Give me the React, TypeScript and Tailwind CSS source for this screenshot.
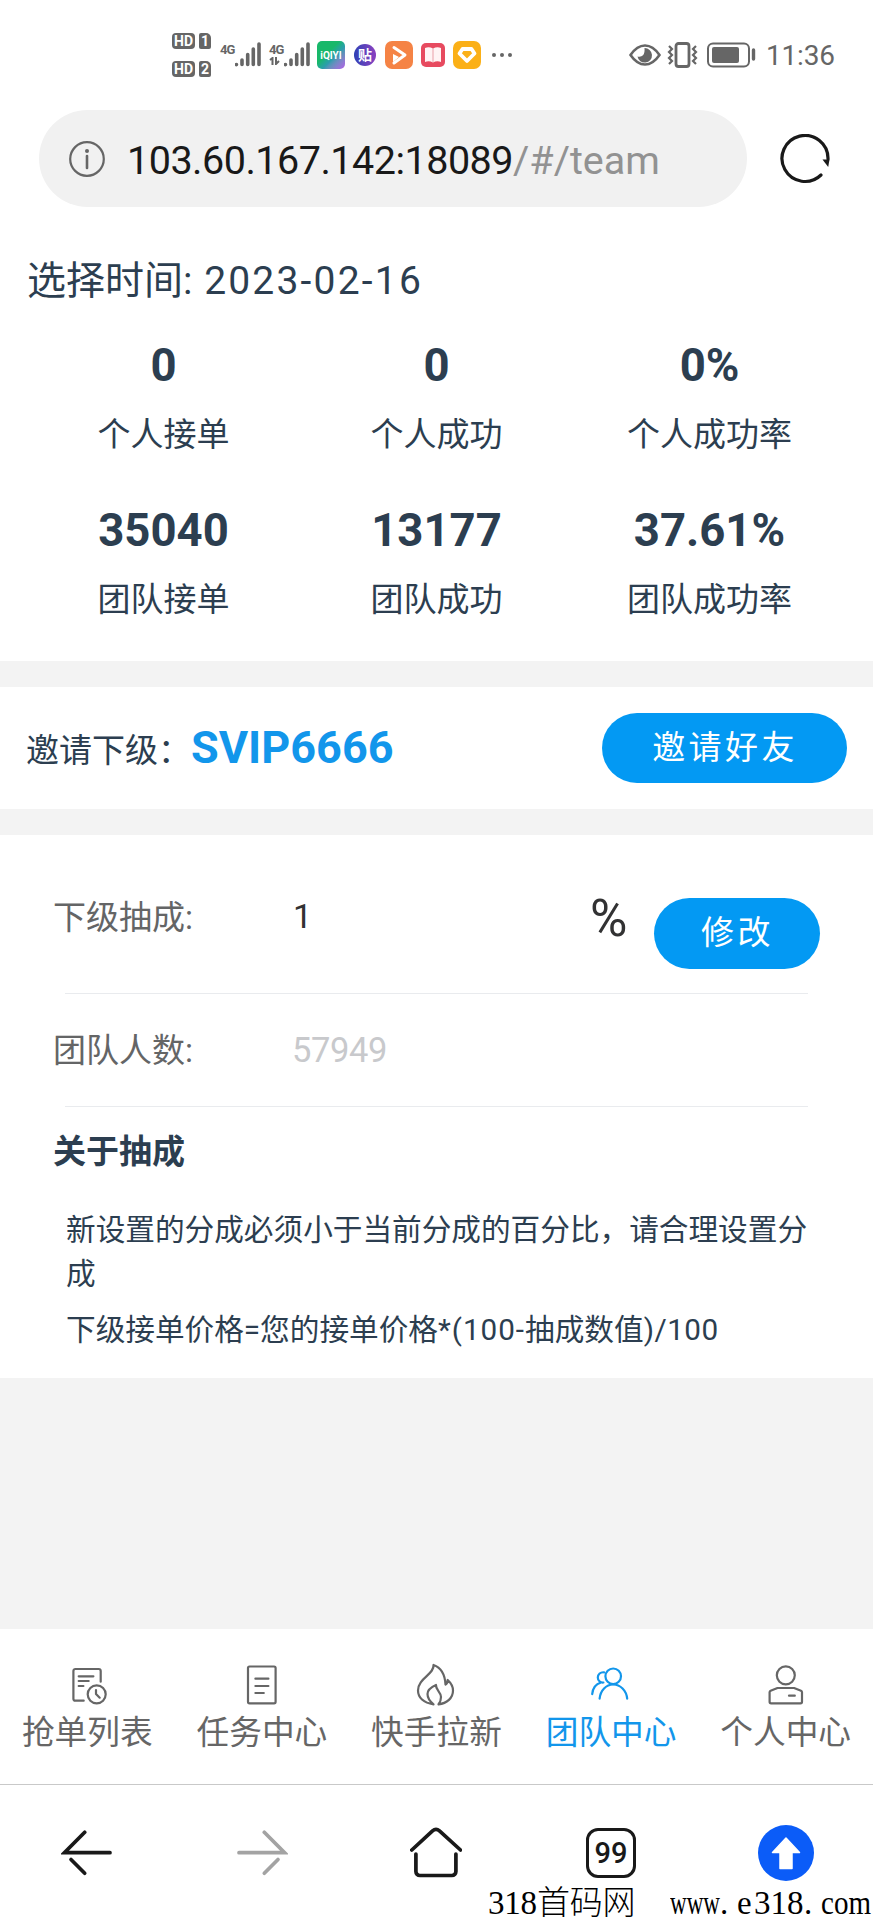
import { useState } from "react";
import type { ReactNode } from "react";

const stats = [
  { value: "0", label: "个人接单" },
  { value: "0", label: "个人成功" },
  { value: "0%", label: "个人成功率" },
  { value: "35040", label: "团队接单" },
  { value: "13177", label: "团队成功" },
  { value: "37.61%", label: "团队成功率" },
];

const tabs: { name: string; icon: ReactNode }[] = [
  {
    name: "抢单列表",
    icon: (
      <>
        <path d="M33.7 16.7V6a2 2 0 0 0-2-2H8.4a2 2 0 0 0-2 2v27.7a2 2 0 0 0 2 2h8.3" />
        <path d="M11.7 11.3h14.7M11.7 16h10M11.7 21h4.7" />
        <circle cx="29.7" cy="29.3" r="9" />
        <path d="M29 25v4l3.7 3.7" />
      </>
    ),
  },
  {
    name: "任务中心",
    icon: (
      <>
        <rect x="6" y="1.5" width="27.6" height="36.8" rx="1.5" />
        <path d="M13.4 13.7h13M13.4 21h13M13.4 28h8.4" />
      </>
    ),
  },
  {
    name: "快手拉新",
    icon: (
      <>
        <path d="M17.5 0c1 9.5-15.5 13-15.5 25.5 0 7 5.5 12.5 15.5 13.8-4-3.3-6-6.3-6-10.3 0-4 4-7 8.5-9-.5 5 5 7 5 12 0 3.2-.8 5.3-2.5 7.3 8.5-.8 14.5-6.3 14.5-13.8 0-4-2-7.5-5.300-10.500.1 2-.6 3.500-2.200 4.500C29 11 26.500 3 17.500 0z" />
      </>
    ),
  },
  {
    name: "团队中心",
    icon: (
      <>
        <circle cx="22.2" cy="11.3" r="7.8" />
        <path d="M8.6 33.7c.8-8.5 6.5-14.2 13.6-14.2s13.2 5.7 14 14.2" />
        <path d="M13 7.3c-3.5-.4-6.2 1.9-6.2 5.2 0 3.1 2.5 5.3 5.6 5M10 17.5C4.8 19 1.7 23.2 1.2 29.2" />
      </>
    ),
  },
  {
    name: "个人中心",
    icon: (
      <>
        <circle cx="19.8" cy="10.3" r="9" />
        <path d="M3.6 36.8v-9.5c0-.7.3-1.2 1-1.5L11.5 23h16.6l6.9 2.8c.7.3 1 .8 1 1.5v9.5a1.5 1.5 0 0 1-1.5 1.5H5.1a1.5 1.5 0 0 1-1.5-1.5z" />
        <path d="M23 30.7h5.8" />
      </>
    ),
  },
];

function HdBadge({ n }: { n: number }) {
  return (
    <div className="flex h-4 gap-1 text-[14px] font-bold leading-4 text-white">
      <span className="w-[23px] rounded-[4px] bg-[#666] text-center">HD</span>
      <span className="w-3 rounded-[2px] rounded-tr-[5px] bg-[#666] text-center">{n}</span>
    </div>
  );
}

function Signal({ data }: { data?: boolean }) {
  return (
    <div className="flex h-7 w-[41px]">
      <div className="w-[15px] text-[13px] font-bold leading-[15px] tracking-[-1px]">
        4G
        {data && (
          <svg viewBox="0 0 12 8" className="h-2 w-3" fill="none" stroke="#666" strokeWidth="2">
            <path d="M1 3l2.5-2v7M7 0v7l3-3" />
          </svg>
        )}
      </div>
      <svg viewBox="0 0 26 26" className="h-[26px] w-[26px]" stroke="#666" strokeWidth="3.6" strokeLinecap="round">
        <path d="M1.5 22.5v.1M7 18v4.5M12.7 12.5v10M18.3 7v15.5M24 2v20.5" />
      </svg>
    </div>
  );
}

function StatusBar() {
  return (
    <div className="flex h-[110px] items-start pl-[172px] pt-[33px] text-[#666]">
      <div className="flex w-[48px] flex-col gap-3">
        <HdBadge n={1} />
        <HdBadge n={2} />
      </div>
      <div className="flex gap-2 pt-[9px]">
        <Signal />
        <Signal data />
      </div>
      <div className="ml-[7px] flex h-11 items-center">
        <div className="flex h-7 w-7 items-center justify-center rounded-[5px] bg-linear-to-br from-[#18b86a] from-40% via-[#2d9cae] via-60% to-[#b05be8] text-[10px] font-bold text-white">
          iQIYI
        </div>
        <div className="ml-[9px] flex h-[22px] w-[22px] items-center justify-center rounded-full bg-linear-to-r from-[#2b3fb5] to-[#8b3fc0] text-[14px] font-bold text-white">
          贴
        </div>
        <svg viewBox="0 0 28 28" className="ml-[9px] h-7 w-7">
          <rect width="28" height="28" rx="7" fill="#f58345" />
          <path d="M9 6.5l11 7.5L9 22" fill="none" stroke="#fff" strokeWidth="3" strokeLinejoin="round" strokeLinecap="round" />
          <path d="M8 13l6 3-6 5z" fill="#fff" />
        </svg>
        <svg viewBox="0 0 24 24" className="ml-2 h-6 w-6">
          <rect width="24" height="24" rx="5" fill="#e74a5f" />
          <path d="M4 5q4-1.5 8 .5 4-2 8-.5v14q-4-1.5-8 .5-4-2-8-.5z" fill="#fff4f4" />
          <path d="M12 5v14" stroke="#e9a0a8" />
        </svg>
        <svg viewBox="0 0 28 28" className="ml-2 h-7 w-7">
          <rect width="28" height="28" rx="7" fill="#fbb017" />
          <path d="M9.5 8h9l3 4.5L14 20l-7.5-7.5z" fill="none" stroke="#fff" strokeWidth="3.8" strokeLinejoin="round" />
        </svg>
        <svg viewBox="0 0 22 6" className="ml-[10px] h-[6px] w-[22px]" fill="#666">
          <circle cx="3" cy="3" r="2" />
          <circle cx="11" cy="3" r="2" />
          <circle cx="19" cy="3" r="2" />
        </svg>
      </div>
      <div className="ml-[116px] flex h-11 items-center">
        <svg viewBox="0 0 32 22" className="h-[22px] w-8" fill="none" stroke="#666" strokeWidth="2.6">
          <path d="M1.5 11Q8 1.5 16 1.5T30.5 11Q24 20.5 16 20.5T1.5 11z" />
          <path d="M15.5 4a7.3 7.3 0 1 1-7 8.5q3.5.8 5.5-1.2t1.5-7.3z" fill="#666" stroke="none" />
        </svg>
        <svg viewBox="0 0 32 26" className="ml-[6px] h-[26px] w-8" fill="none" stroke="#666" strokeWidth="2.2">
          <rect x="9" y="1.5" width="13" height="23" rx="2.5" strokeWidth="2.8" />
          <path d="M2 4l3 3-3 3 3 3-3 3 3 3-3 3M29 4l-3 3 3 3-3 3 3 3-3 3 3 3" />
        </svg>
        <svg viewBox="0 0 50 26" className="ml-2 h-[26px] w-[50px]" fill="none" stroke="#666" strokeWidth="2">
          <rect x="1" y="1.5" width="41" height="23" rx="5" />
          <rect x="5" y="5" width="27" height="16" rx="2" fill="#666" stroke="none" />
          <path d="M46.5 8v9" strokeWidth="3.4" strokeLinecap="round" />
        </svg>
        <span className="ml-[9px] pt-[2px] text-[28px] leading-none tracking-[-0.2px]">11:36</span>
      </div>
    </div>
  );
}

function AddressBar() {
  return (
    <div className="flex h-[97px] items-center pl-[39px]">
      <div className="flex h-full w-[708px] items-center rounded-full bg-[#f1f1f1] pl-[30px]">
        <svg viewBox="0 0 36 36" className="h-9 w-9" fill="none" stroke="#666" strokeWidth="2.2">
          <circle cx="18" cy="18" r="16.8" />
          <path d="M18 15v12" strokeWidth="2.6" strokeLinecap="round" />
          <circle cx="18" cy="10" r="2" fill="#666" stroke="none" />
        </svg>
        <div className="ml-[22px] whitespace-nowrap pt-[5px] text-[39.5px] leading-none text-[#191919]">
          <span className="tracking-[-0.5px]">103.60.167.142:18089</span>
          <span className="text-[#929292]">/#/team</span>
        </div>
      </div>
      <button className="ml-[33px]" aria-label="刷新">
        <svg viewBox="0 0 50 50" className="h-[50px] w-[50px]" fill="none" stroke="#191919" strokeWidth="3.2">
          <path d="M41 41A23 23 0 1 1 48 25" strokeLinecap="round" />
          <path d="M42.5 25.5h7L48.2 33z" fill="#191919" stroke="none" />
        </svg>
      </button>
    </div>
  );
}

export default function App() {
  const [active, setActive] = useState("团队中心");
  const [rate, setRate] = useState("1");

  return (
    <div className="relative flex h-[1920px] w-[873px] flex-col overflow-hidden bg-[#f3f3f3] font-['Roboto','Noto_Sans_CJK_SC',sans-serif] text-[#2c3e50]">
      <header className="bg-white">
        <StatusBar />
        <AddressBar />
      </header>

      <section className="h-[454px] bg-white px-[27px] pt-[45px]">
        <div className="flex h-[58px] items-center whitespace-pre text-[39px] leading-none">
          选择时间: <span className="ml-[2px] tracking-[2.2px]">2023-02-16</span>
        </div>
        <div className="grid grid-cols-3 pt-[24px]">
          {stats.map((s) => (
            <div key={s.label} className="flex h-[165px] flex-col items-center">
              <div className="flex h-[64px] items-center text-[45.5px] font-bold leading-none">{s.value}</div>
              <div className="mt-[12px] flex h-[48px] items-center text-[33px] leading-none">{s.label}</div>
            </div>
          ))}
        </div>
      </section>

      <section className="mt-[26px] flex h-[122px] items-center bg-white px-[26px]">
        <span className="pt-[5px] text-[33px]">邀请下级：</span>
        <span className="text-[45px] font-bold text-[#1296eb]">SVIP6666</span>
        <button className="ml-auto h-[70px] w-[245px] rounded-full bg-[#0399f3] pb-[2px] pl-px text-[33px] leading-none tracking-[3.4px] text-white">
          邀请好友
        </button>
      </section>

      <section className="mt-[26px] h-[543px] bg-white px-[53px]">
        <div className="flex h-[158px] items-start pt-[63px] text-[33px] leading-none text-[#646566]">
          <label className="flex h-[38px] w-[239px] items-center">下级抽成:</label>
          <input
            value={rate}
            onChange={(e) => setRate(e.target.value)}
            className="h-[36px] w-[200px] pl-px text-[34px] text-[#323233] outline-none"
          />
          <span className="ml-[98px] flex h-[40px] items-center text-[51px] text-[#323233]">%</span>
          <button className="ml-auto h-[71px] w-[166px] rounded-full bg-[#0399f3] pb-[2px] pl-px tracking-[3.4px] text-white">
            修改
          </button>
        </div>
        <div className="mx-[12px] h-px bg-[#e9ebee]" />
        <div className="flex h-[112px] items-center text-[33px] leading-none text-[#646566]">
          <span className="w-[239px]">团队人数:</span>
          <span className="text-[34.5px] tracking-[-0.4px] text-[#c8c9cc]">57949</span>
        </div>
        <div className="mx-[12px] h-px bg-[#e9ebee]" />
        <h2 className="flex h-[88px] items-center text-[33px] font-bold leading-none">关于抽成</h2>
        <div className="pl-[13px] pr-[11px] pt-[13px] text-[29.65px] leading-[43.5px]">
          <p>新设置的分成必须小于当前分成的百分比，请合理设置分成</p>
          <p className="mt-[13px] whitespace-nowrap">
            下级接单价格=您的接单价格<span className="tracking-[1px]">*(100-</span>抽成数值
            <span className="tracking-[0.5px]">)/100</span>
          </p>
        </div>
      </section>

      <nav className="mt-auto grid h-[155px] grid-cols-5 bg-white pt-[36px]">
        {tabs.map((t) => (
          <button
            key={t.name}
            onClick={() => setActive(t.name)}
            className={"flex flex-col items-center " + (active === t.name ? "text-[#1296eb]" : "text-[#666]")}
          >
            <svg viewBox="0 0 40 40" className="h-10 w-10 overflow-visible" fill="none" stroke="currentColor" strokeWidth="2.2" strokeLinecap="round" strokeLinejoin="round">
              {t.icon}
            </svg>
            <span className="mt-[4px] text-[32.7px] leading-[48px]">{t.name}</span>
          </button>
        ))}
      </nav>

      <footer className="grid h-[136px] grid-cols-5 justify-items-center border-t border-[#c9c9c9] bg-white pt-[42px]">
        <svg viewBox="0 0 52 52" className="h-[52px] w-[52px]" fill="none" stroke="#191919" strokeWidth="3.7" strokeLinecap="round">
          <path d="M23.7 5.3L3.4 25.7H49" />
          <path d="M10 32.5l13.7 13.8" />
        </svg>
        <svg viewBox="0 0 52 52" className="h-[52px] w-[52px]" fill="none" stroke="#a3a3a3" strokeWidth="3.7" strokeLinecap="round">
          <path d="M28.3 5.3l20.3 20.4H3" />
          <path d="M42 32.5L28.3 46.3" />
        </svg>
        <svg viewBox="0 0 52 52" className="h-[52px] w-[52px]" fill="none" stroke="#191919" strokeWidth="3.7" strokeLinecap="round">
          <path d="M1.8 23L22.5 3.8q3.5-3 7 0L50.5 23" />
          <path d="M5.9 27v17.500a4 4 0 0 0 4 4h32a4 4 0 0 0 4-4V27" />
        </svg>
        <div className="mt-px flex h-[50px] w-[50px] items-center justify-center rounded-[12px] border-[3.7px] border-[#191919] text-[29px] font-medium leading-none text-[#191919]">
          99
        </div>
        <svg viewBox="0 0 56 56" className="-mt-[2px] h-14 w-14">
          <circle cx="28" cy="28" r="28" fill="#0b5cf8" />
          <path d="M28 13L41.5 27.5H34V43.5H22V27.5H14.5z" fill="#fff" stroke="#fff" strokeWidth="1.5" strokeLinejoin="round" />
        </svg>
      </footer>

      {/* site mark over the browser buttons */}
      <div className="absolute bottom-0 right-0 flex h-[33px] items-center whitespace-pre font-['Liberation_Serif','Noto_Sans_CJK_SC',serif] text-[33px] leading-none text-black">
        <span className="w-[182px] font-light tracking-[-0.2px]">318首码网</span>
        <span className="w-[50px] origin-left scale-x-[0.7]">www</span>
        <span className="w-[17px]">.</span>
        <span className="w-[17px]">e</span>
        <span className="w-[50px]">318</span>
        <span className="w-[17px]">.</span>
        <span className="w-[52px] origin-left scale-x-[0.88]">com</span>
      </div>
    </div>
  );
}
